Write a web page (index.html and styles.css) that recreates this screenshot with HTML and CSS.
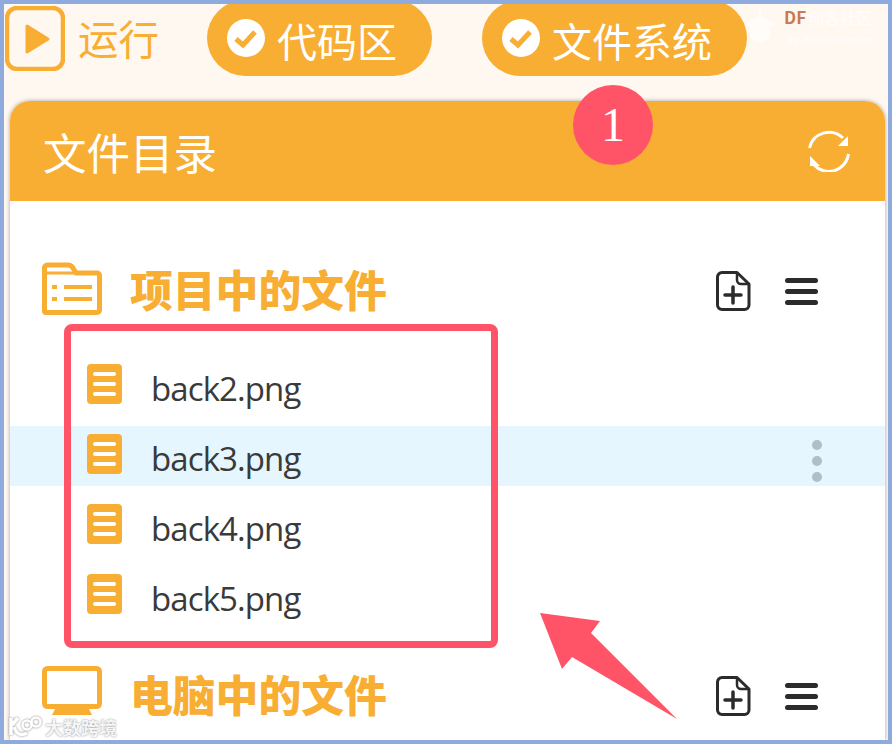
FILE: index.html
```html
<!DOCTYPE html>
<html lang="zh-CN">
<head>
    <meta charset="UTF-8">
    <meta name="viewport" content="width=device-width, initial-scale=1.0">
    <title>文件目录</title>
    <link rel="stylesheet" href="styles.css">
</head>
<body>
<div class="frame">

    <!-- Top bar -->
    <div class="topbar">
        <svg class="play-icon" viewBox="0 0 60 65">
            <rect x="2" y="2" width="56" height="61" rx="10" fill="none" stroke="#f8ad33" stroke-width="4.5"/>
            <path d="M22 20 L43 33 L22 46 Z" fill="#f8ad33" stroke="#f8ad33" stroke-width="3" stroke-linejoin="round"/>
        </svg>
        <span class="run-label">运行</span>
        <div class="pill pill-code">
            <svg class="check-icon" viewBox="0 0 38 38">
                <circle cx="19" cy="19" r="19" fill="#fff"/>
                <path d="M9 20 L16 26 L28 13" fill="none" stroke="#f8ad33" stroke-width="5"/>
            </svg>
            <span>代码区</span>
        </div>
        <div class="pill pill-files">
            <svg class="check-icon" viewBox="0 0 38 38">
                <circle cx="19" cy="19" r="19" fill="#fff"/>
                <path d="M9 20 L16 26 L28 13" fill="none" stroke="#f8ad33" stroke-width="5"/>
            </svg>
            <span>文件系统</span>
        </div>
    </div>

    <!-- File panel -->
    <div class="panel">
        <div class="panel-head">
            <span class="panel-title">文件目录</span>
            <svg class="refresh-icon" viewBox="0 0 42 42">
                <path d="M1.500 18 A20 20 0 0 1 35 8" fill="none" stroke="#fff" stroke-width="3"/>
                <path d="M40.500 24 A20 20 0 0 1 6 35" fill="none" stroke="#fff" stroke-width="3"/>
                <path d="M40 6 V16 H30 Z" fill="#fff"/>
                <path d="M2 26 V36 H12 Z" fill="#fff"/>
            </svg>
        </div>

        <div class="section-head first">
            <svg class="section-icon" viewBox="0 0 60 53">
                <path d="M2.500 49 V6 A3 3 0 0 1 5.500 3 H26 Q29 3 31 6 L34 11 H55 A2.500 2.500 0 0 1 57.500 13.500 V48 A2.500 2.500 0 0 1 55 50.500 H4 A1.500 1.500 0 0 1 2.500 49 Z" fill="none" stroke="#f8ad33" stroke-width="5" stroke-linejoin="round"/>
                <path d="M3 11 H34" fill="none" stroke="#f8ad33" stroke-width="3"/>
                <path d="M10 25 H15 M10 37 H15 M22 25 H50 M22 37 H50" fill="none" stroke="#f8ad33" stroke-width="4"/>
            </svg>
            <span class="section-title">项目中的文件</span>
            <div class="section-actions">
                <svg class="add-icon" viewBox="0 0 35 40">
                    <path d="M6 1.500 H21 L33 13 V34 A4.500 4.500 0 0 1 28.500 38.500 H6 A4.500 4.500 0 0 1 1.500 34 V6 A4.500 4.500 0 0 1 6 1.500 Z" fill="none" stroke="#2b2b2b" stroke-width="3" stroke-linejoin="round"/>
                    <path d="M21 2 V9 A4 4 0 0 0 25 13 H32" fill="none" stroke="#2b2b2b" stroke-width="2.500"/>
                    <path d="M9 24 H25 M17 16 V32" fill="none" stroke="#2b2b2b" stroke-width="3.500" stroke-linecap="round"/>
                </svg>
                <div class="menu-icon"><i></i><i></i><i></i></div>
            </div>
        </div>

        <ul class="file-list">
            <li class="file-row">
                <span class="file-icon"><i></i><i></i><i></i></span>
                <span class="file-name">back2.png</span>
            </li>
            <li class="file-row active">
                <span class="file-icon"><i></i><i></i><i></i></span>
                <span class="file-name">back3.png</span>
                <span class="more-icon"><i></i><i></i><i></i></span>
            </li>
            <li class="file-row">
                <span class="file-icon"><i></i><i></i><i></i></span>
                <span class="file-name">back4.png</span>
            </li>
            <li class="file-row">
                <span class="file-icon"><i></i><i></i><i></i></span>
                <span class="file-name">back5.png</span>
            </li>
        </ul>

        <div class="section-head second">
            <svg class="section-icon pc" viewBox="0 0 60 50">
                <rect x="2.500" y="2.500" width="55" height="38" rx="3" fill="none" stroke="#f8ad33" stroke-width="5"/>
                <path d="M13 43 H47 L50 49 H10 Z" fill="#f8ad33"/>
            </svg>
            <span class="section-title">电脑中的文件</span>
            <div class="section-actions">
                <svg class="add-icon" viewBox="0 0 35 40">
                    <path d="M6 1.500 H21 L33 13 V34 A4.500 4.500 0 0 1 28.500 38.500 H6 A4.500 4.500 0 0 1 1.500 34 V6 A4.500 4.500 0 0 1 6 1.500 Z" fill="none" stroke="#2b2b2b" stroke-width="3" stroke-linejoin="round"/>
                    <path d="M21 2 V9 A4 4 0 0 0 25 13 H32" fill="none" stroke="#2b2b2b" stroke-width="2.500"/>
                    <path d="M9 24 H25 M17 16 V32" fill="none" stroke="#2b2b2b" stroke-width="3.500" stroke-linecap="round"/>
                </svg>
                <div class="menu-icon"><i></i><i></i><i></i></div>
            </div>
        </div>
    </div>

    <!-- Annotations drawn over the screenshot -->
    <div class="badge">1</div>
    <div class="highlight-box"></div>
    <svg class="arrow" viewBox="0 0 140 110">
        <path d="M0 0 L60 8 L51 20 L137 106 L32 44 L22 56 Z" fill="#ff5468"/>
    </svg>

    <!-- Watermarks -->
    <div class="mark-df">
        <svg class="mark-hat" viewBox="0 0 28 36">
            <path d="M14 2 V10 M1 17 L14 10 L27 17 L14 24 Z M5 21 V30 Q14 37 23 30 V21" fill="#fff" stroke="#fff" stroke-width="2" opacity="0.7"/>
        </svg>
        <div class="mark-text">
            <div class="mark-line"><b>DF</b><span>创客社区</span></div>
            <div class="mark-sub">mc.DFRobot.com.cn</div>
        </div>
    </div>
    <div class="mark-dashu">
        <svg class="mark-logo" viewBox="0 0 34 22">
            <path d="M3 2 V19 M3 10 L10 2 M6 11 Q10 22 19 17" fill="none" stroke="#fff" stroke-width="3.500"/>
            <circle cx="19" cy="9" r="4.500" fill="none" stroke="#fff" stroke-width="2.500"/>
            <circle cx="28" cy="6" r="4.500" fill="none" stroke="#fff" stroke-width="2.500"/>
        </svg>
        <span>大数跨境</span>
    </div>

</div>
</body>
</html>
```

FILE: styles.css
```css
/* Base */
html, body {
    margin: 0;
    padding: 0;
}

body {
    font-family: "Noto Sans CJK SC", "Noto Sans", sans-serif;
}

.frame {
    position: relative;
    box-sizing: border-box;
    width: 892px;
    height: 744px;
    border: 4px solid #8faadc;
    background-color: #fff8f1;
    overflow: hidden;
}

/* Top bar */
.topbar {
    display: flex;
    align-items: flex-end;
    height: 72px;
    padding-left: 1px;
    color: #f8ad33;
}

.play-icon {
    align-self: flex-start;
    width: 60px;
    height: 65px;
    margin-top: 2px;
    flex: none;
}

.run-label {
    align-self: flex-start;
    margin-left: 13px;
    width: 129px;
    font-size: 40.500px;
    line-height: 72px;
    margin-top: -2px;
}

/* Pills run past the top of the frame, which cuts them off */
.pill {
    display: flex;
    align-items: center;
    height: 76px;
    box-sizing: border-box;
    padding-left: 20px;
    flex: none;
    border-radius: 38px;
    background-color: #f8ad33;
    color: #fff;
    font-size: 40px;
}

.pill span {
    margin-left: 12px;
    padding-top: 3px;
}

.pill-code {
    width: 225px;
}

.pill-files {
    width: 265px;
    margin-left: 50px;
}

.check-icon {
    width: 38px;
    height: 38px;
    flex: none;
}

/* Panel */
.panel {
    margin: 25px 3px 0 6px;
    height: 640px;
    border-radius: 20px 20px 0 0;
    background-color: #fff;
    box-shadow: 0 0 4px rgba(0, 0, 0, 0.35);
}

.panel-head {
    display: flex;
    align-items: center;
    justify-content: space-between;
    height: 100px;
    padding: 0 35px 0 33px;
    border-radius: 20px 20px 0 0;
    background-color: #f8ad33;
    color: #fff;
}

.panel-title {
    font-size: 43.500px;
}

.refresh-icon {
    width: 42px;
    height: 42px;
}

/* Sections */
.section-head {
    display: flex;
    align-items: center;
    height: 56px;
    padding-left: 32px;
}

.section-head.first {
    margin-top: 59px;
}

.section-head.second {
    margin-top: 37px;
}

.section-icon {
    width: 60px;
    height: 53px;
    flex: none;
}

.section-icon.pc {
    height: 50px;
}

.section-title {
    margin-left: 28px;
    color: #f8ad33;
    font-size: 42.800px;
    font-weight: 900;
    line-height: 56px;
}

.second .section-title {
    padding-top: 4px;
}

.section-actions {
    display: flex;
    align-items: center;
    gap: 34px;
    margin-left: auto;
    margin-right: 67px;
    padding-top: 6px;
}

.second .section-actions {
    padding-top: 10px;
}

.add-icon {
    width: 35px;
    height: 40px;
}

.menu-icon {
    display: flex;
    flex-direction: column;
    gap: 6px;
    width: 33px;
}

.menu-icon i {
    height: 5px;
    border-radius: 3px;
    background-color: #2b2b2b;
}

/* File list */
.file-list {
    list-style: none;
    margin: 40px 0 0;
    padding: 0;
}

.file-row {
    display: flex;
    align-items: center;
    height: 60px;
    margin-bottom: 10px;
    padding: 0 63px 0 77px;
    color: #3a3a3a;
}

.file-row.active {
    background-color: #e5f6fe;
}

.file-icon {
    display: flex;
    flex-direction: column;
    justify-content: center;
    gap: 6px;
    box-sizing: border-box;
    width: 35px;
    height: 40px;
    margin-top: -4px;
    padding: 0 6px;
    border-radius: 4px;
    background-color: #f8ad33;
    flex: none;
}

.file-icon i {
    height: 4px;
    border-radius: 2px;
    background-color: #fff;
}

.file-name {
    margin-left: 29px;
    padding-top: 4px;
    font-family: "Open Sans", "Noto Sans", sans-serif;
    font-size: 33px;
    letter-spacing: -0.900px;
}

.more-icon {
    display: flex;
    flex-direction: column;
    gap: 6px;
    margin-left: auto;
    margin-top: 10px;
}

.more-icon i {
    width: 10px;
    height: 10px;
    border-radius: 50%;
    background-color: #b0bec5;
}

/* Annotations */
.badge {
    position: absolute;
    left: 569px;
    top: 81px;
    width: 80px;
    height: 80px;
    border-radius: 50%;
    background-color: #ff5468;
    color: #fff;
    font-family: "Liberation Serif", serif;
    font-size: 48px;
    line-height: 80px;
    text-align: center;
}

.highlight-box {
    position: absolute;
    left: 60px;
    top: 320px;
    width: 434px;
    height: 324px;
    box-sizing: border-box;
    border: 7px solid #ff5468;
    border-radius: 8px;
}

.arrow {
    position: absolute;
    left: 536px;
    top: 609px;
    width: 140px;
    height: 110px;
}

/* Watermarks */
.mark-df {
    position: absolute;
    left: 742px;
    top: 1px;
    display: flex;
    gap: 10px;
}

.mark-hat {
    width: 28px;
    height: 36px;
    margin-top: 2px;
}

.mark-text {
    line-height: 1;
}

.mark-line {
    height: 24px;
    font-size: 16px;
    line-height: 24px;
    color: #fff;
    white-space: nowrap;
}

.mark-line b {
    color: #c87a50;
    font-size: 17px;
    margin-right: 2px;
}

.mark-line span {
    opacity: 0.7;
}

.mark-sub {
    margin-top: 5px;
    padding-left: 3px;
    font-size: 9px;
    line-height: 11px;
    color: #fff;
    opacity: 0.8;
}

.mark-dashu {
    position: absolute;
    left: 4px;
    top: 711px;
    display: flex;
    align-items: center;
    gap: 3px;
    color: #f6f6f6;
    font-size: 18px;
    font-weight: 700;
    line-height: 24px;
    text-shadow: 0 0 2px #888;
}

.mark-logo {
    width: 34px;
    height: 22px;
    filter: drop-shadow(0 0 1px #888);
}
```
